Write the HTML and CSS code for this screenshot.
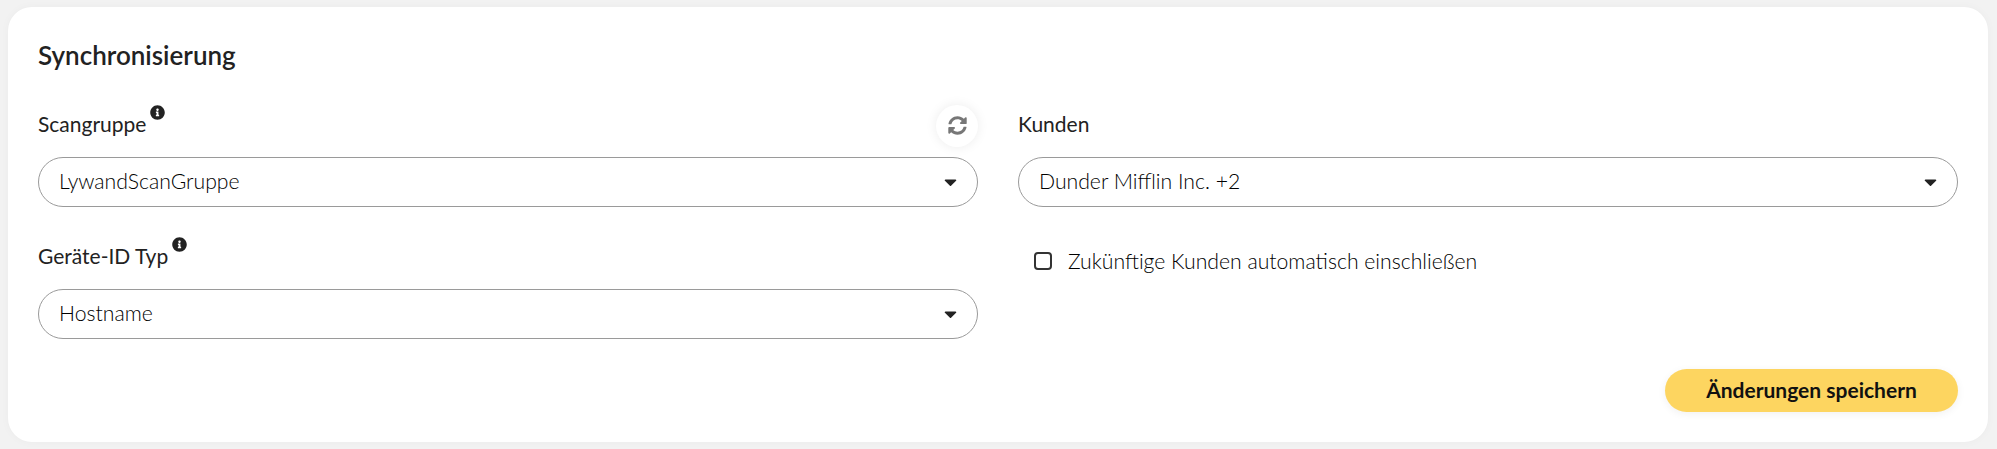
FILE: index.html
```html
<!DOCTYPE html>
<html lang="de">
<head>
  <meta charset="UTF-8" />
  <title>Synchronisierung</title>
  <link rel="stylesheet" href="styles.css">
</head>
<body>
  <div class="card">
    <h2 class="card-title">Synchronisierung</h2>

    <div class="form-grid">
      <!-- Left column -->
      <div class="form-col">
        <div class="field">
          <div class="label-row">
            <span class="label">Scangruppe</span>
            <svg class="info-icon" viewBox="0 0 512 512"><path d="M256 8C119.043 8 8 119.083 8 256c0 136.997 111.043 248 248 248s248-111.003 248-248C504 119.083 392.957 8 256 8zm0 110c23.196 0 42 18.804 42 42s-18.804 42-42 42-42-18.804-42-42 18.804-42 42-42zm56 254c0 6.627-5.373 12-12 12h-88c-6.627 0-12-5.373-12-12v-24c0-6.627 5.373-12 12-12h12v-64h-12c-6.627 0-12-5.373-12-12v-24c0-6.627 5.373-12 12-12h64c6.627 0 12 5.373 12 12v100h12c6.627 0 12 5.373 12 12v24z"/></svg>
            <button class="refresh-btn">
              <svg class="refresh-icon" viewBox="0 0 512 512"><path d="M370.72 133.28C339.458 104.008 298.888 87.962 255.848 88c-77.458.068-144.328 53.178-162.791 126.85-1.344 5.363-6.122 9.15-11.651 9.15H24.103c-7.498 0-13.194-6.807-11.807-14.176C33.933 94.924 134.813 8 256 8c66.448 0 126.791 26.136 171.315 68.685L463.03 40.97C478.149 25.851 504 36.559 504 57.941V192c0 13.255-10.745 24-24 24H345.941c-21.382 0-32.09-25.851-16.971-40.971l41.75-41.749zM32 296h134.059c21.382 0 32.09 25.851 16.971 40.971l-41.75 41.75c31.262 29.273 71.835 45.319 114.876 45.28 77.418-.07 144.315-53.144 162.787-126.849 1.344-5.363 6.122-9.15 11.651-9.15h57.304c7.498 0 13.194 6.807 11.807 14.176C478.067 417.076 377.187 504 256 504c-66.448 0-126.791-26.136-171.315-68.685L48.97 471.03C33.851 486.149 8 475.441 8 454.059V320c0-13.255 10.745-24 24-24z"/></svg>
            </button>
          </div>
          <div class="select">
            <span>LywandScanGruppe</span>
            <svg class="caret" viewBox="0 0 320 512"><path d="M31.3 192h257.3c17.8 0 26.7 21.5 14.1 34.1L174.1 354.8c-7.8 7.8-20.5 7.8-28.3 0L17.2 226.1C4.6 213.5 13.5 192 31.3 192z"/></svg>
          </div>
        </div>

        <div class="field">
          <div class="label-row">
            <span class="label">Geräte-ID Typ</span>
            <svg class="info-icon" viewBox="0 0 512 512"><path d="M256 8C119.043 8 8 119.083 8 256c0 136.997 111.043 248 248 248s248-111.003 248-248C504 119.083 392.957 8 256 8zm0 110c23.196 0 42 18.804 42 42s-18.804 42-42 42-42-18.804-42-42 18.804-42 42-42zm56 254c0 6.627-5.373 12-12 12h-88c-6.627 0-12-5.373-12-12v-24c0-6.627 5.373-12 12-12h12v-64h-12c-6.627 0-12-5.373-12-12v-24c0-6.627 5.373-12 12-12h64c6.627 0 12 5.373 12 12v100h12c6.627 0 12 5.373 12 12v24z"/></svg>
          </div>
          <div class="select">
            <span>Hostname</span>
            <svg class="caret" viewBox="0 0 320 512"><path d="M31.3 192h257.3c17.8 0 26.7 21.5 14.1 34.1L174.1 354.8c-7.8 7.8-20.5 7.8-28.3 0L17.2 226.1C4.6 213.5 13.5 192 31.3 192z"/></svg>
          </div>
        </div>
      </div>

      <!-- Right column -->
      <div class="form-col">
        <div class="field">
          <div class="label-row">
            <span class="label">Kunden</span>
          </div>
          <div class="select">
            <span>Dunder Mifflin Inc. +2</span>
            <svg class="caret" viewBox="0 0 320 512"><path d="M31.3 192h257.3c17.8 0 26.7 21.5 14.1 34.1L174.1 354.8c-7.8 7.8-20.5 7.8-28.3 0L17.2 226.1C4.6 213.5 13.5 192 31.3 192z"/></svg>
          </div>
        </div>

        <label class="check-row">
          <span class="checkbox"></span>
          <span>Zukünftige Kunden automatisch einschließen</span>
        </label>
      </div>
    </div>

    <div class="actions">
      <button class="save-btn">Änderungen speichern</button>
    </div>
  </div>
</body>
</html>
```

FILE: styles.css
```css
* {
  box-sizing: border-box;
}

body {
  margin: 0;
  padding: 7px 9px 7px 8px;
  background: #f2f2f2;
  font-family: "Lato", "Open Sans", sans-serif;
  color: #222;
}

.card {
  background: #fff;
  border-radius: 24px;
  box-shadow: 0 0 10px rgba(0, 0, 0, 0.03);
  padding: 33px 30px 30px;
  height: 435px;
}

.card-title {
  margin: 0 0 34px;
  font-size: 26px;
  line-height: 30px;
  font-weight: 600;
}

.form-grid {
  display: grid;
  grid-template-columns: 1fr 1fr;
  column-gap: 40px;
}

.form-col {
  display: flex;
  flex-direction: column;
}

.field + .field {
  margin-top: 29px;
}

.label-row {
  display: flex;
  align-items: center;
  height: 43px;
  margin-bottom: 10px;
}

.label {
  font-size: 21px;
  margin-top: -4px;
}

.info-icon {
  align-self: flex-start;
  width: 15px;
  height: 15px;
  margin: 1px 0 0 4px;
  fill: #222;
}

.refresh-btn {
  display: flex;
  align-items: center;
  justify-content: center;
  width: 42px;
  height: 42px;
  margin-left: auto;
  padding: 0;
  border: none;
  border-radius: 50%;
  background: #fff;
  box-shadow: 0 0 12px rgba(0, 0, 0, 0.08);
}

.refresh-icon {
  width: 19px;
  height: 19px;
  fill: #777;
}

.select {
  display: flex;
  align-items: center;
  justify-content: space-between;
  height: 50px;
  padding: 0 20px 2px;
  border: 1px solid #9a9a9a;
  border-radius: 25px;
  font-size: 21.2px;
  font-weight: 300;
  color: #000;
}

.caret {
  width: 13px;
  height: 20px;
  margin-top: 2px;
  fill: #222;
}

.check-row {
  display: flex;
  align-items: center;
  gap: 16px;
  height: 40px;
  margin-top: 34px;
  padding-left: 16px;
  font-size: 21.2px;
  font-weight: 300;
  color: #000;
}

.checkbox {
  width: 18px;
  height: 18px;
  border: 2px solid #333;
  border-radius: 4px;
}

.actions {
  display: flex;
  justify-content: flex-end;
  margin-top: 30px;
}

.save-btn {
  width: 293px;
  height: 43px;
  padding: 0 0 2px;
  border: none;
  border-radius: 22px;
  background: #fdd560;
  box-shadow: 0 2px 8px rgba(0, 0, 0, 0.06);
  font-family: inherit;
  font-size: 21px;
  font-weight: 700;
  color: #111;
}
```
